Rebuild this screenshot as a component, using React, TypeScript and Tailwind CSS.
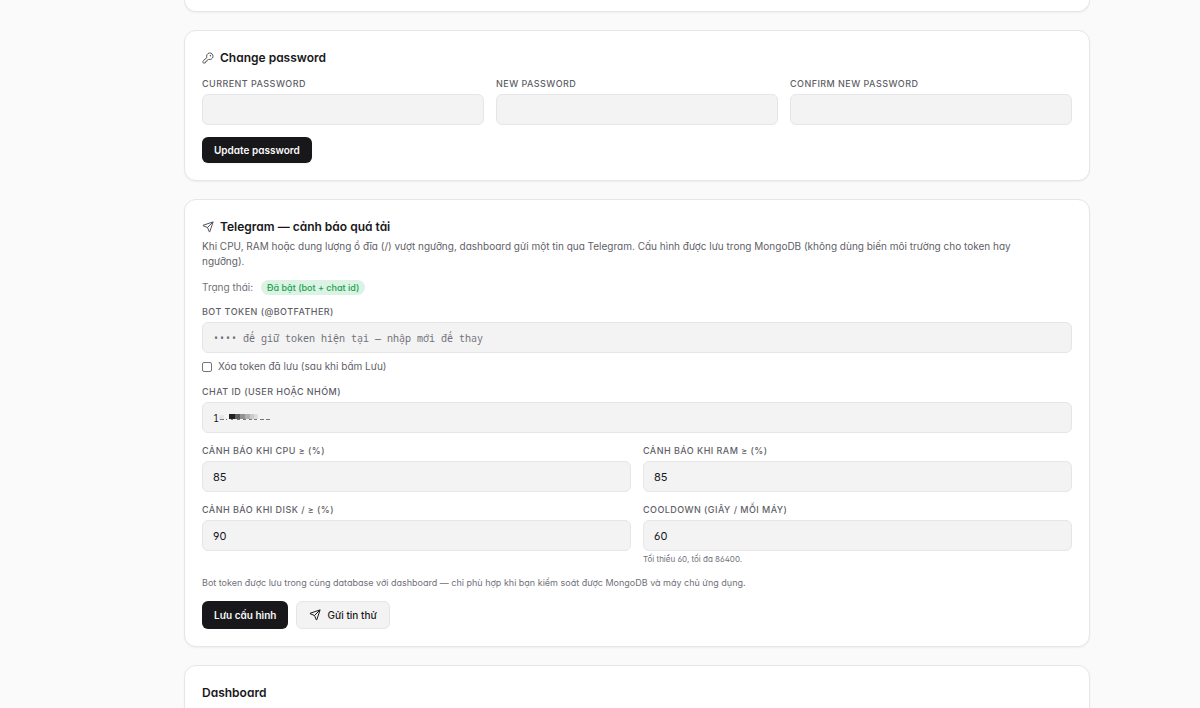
import type { InputHTMLAttributes, ReactNode } from 'react'
import { KeyRound, Send } from 'lucide-react'

type FieldProps = InputHTMLAttributes<HTMLInputElement> & {
  id: string
  label: string
  mono?: boolean
  hint?: string
  overlay?: ReactNode
}

function Field({ id, label, mono, hint, overlay, ...props }: FieldProps) {
  return (
    <div className="flex-1">
      <label htmlFor={id} className="block text-[9px] leading-3 font-medium tracking-wider uppercase text-[#5f5f68]">
        {label}
      </label>
      <div className="relative mt-1">
        <input
          id={id}
          className={`block h-[31px] w-full rounded-md border border-[#e6e6e9] bg-[#f3f3f3] px-2.5 text-[#18181b] placeholder:text-[#71717a] focus:outline-none focus:ring-1 focus:ring-zinc-400 ${
            mono ? "font-['Noto_Sans_Mono','Liberation_Mono',monospace] text-[10px]" : 'text-[11px]'
          }`}
          {...props}
        />
        {overlay}
      </div>
      {hint && <p className="mt-0.5 text-[8px] leading-3 text-[#71717a]">{hint}</p>}
    </div>
  )
}

function Card({ children }: { children: ReactNode }) {
  return (
    <section className="rounded-xl border border-[#e6e6e8] bg-white p-[17px] shadow-xs">{children}</section>
  )
}

function CardTitle({ icon, children }: { icon?: ReactNode; children: ReactNode }) {
  return (
    <h2 className="flex items-center gap-1.5 text-[12px] leading-5 font-semibold text-[#18181b]">
      {icon && <span className="text-[#52525b]">{icon}</span>}
      {children}
    </h2>
  )
}

// mosaic that hides the rest of the chat id
function Mosaic() {
  return (
    <svg viewBox="0 0 54 8" className="pointer-events-none absolute top-[11px] left-[17px] h-2 w-[54px]" aria-hidden="true">
      <g fill="#e6e6e6">
        <rect x="0" y="2" width="5" height="5" />
        <rect x="34" y="1" width="5" height="5" />
      </g>
      <rect x="10" y="1" width="6" height="5" fill="#222225" />
      <rect x="16" y="1" width="5" height="5" fill="#5f5f61" />
      <rect x="21" y="1" width="5" height="5" fill="#929294" />
      <rect x="26" y="1" width="5" height="5" fill="#b0b0b1" />
      <rect x="31" y="1" width="4" height="5" fill="#cbcbcc" />
      <rect x="35" y="1" width="4" height="5" fill="#dedede" />
      <g fill="#77777a">
        <rect x="1" y="6" width="4" height="1" />
        <rect x="7" y="6" width="1" height="1" />
        <rect x="12" y="6" width="2" height="1" />
        <rect x="18" y="6" width="3" height="1" />
        <rect x="24" y="6" width="3" height="1" />
        <rect x="30" y="6" width="3" height="1" />
        <rect x="35" y="6" width="3" height="1" />
        <rect x="41" y="6" width="4" height="1" />
        <rect x="47" y="6" width="4" height="1" />
      </g>
    </svg>
  )
}

export default function App() {
  return (
    <div className="h-screen overflow-hidden bg-[#fafafa] font-['Inter',sans-serif] [font-feature-settings:'cv02','cv03','cv04','cv11']">
      <main className="mr-[110px] ml-[184px] space-y-[18px]">
        <div className="h-3 rounded-b-xl border border-t-0 border-[#e6e6e8] bg-white shadow-xs" />

        <Card>
          <CardTitle icon={<KeyRound className="size-3" />}>Change password</CardTitle>
          <form className="mt-2.5" onSubmit={(e) => e.preventDefault()}>
            <div className="flex gap-3">
              <Field id="current" label="Current password" type="password" />
              <Field id="new" label="New password" type="password" />
              <Field id="confirm" label="Confirm new password" type="password" />
            </div>
            <button className="mt-3 h-[26px] rounded-md bg-[#18181b] px-3 text-[10px] font-semibold text-[#fafafa] shadow-xs">
              Update password
            </button>
          </form>
        </Card>

        <Card>
          <CardTitle icon={<Send className="size-3" />}>Telegram — cảnh báo quá tải</CardTitle>
          <p className="mt-0.5 pr-7 text-[10px] leading-[15px] text-[#5f5f68]">
            Khi CPU, RAM hoặc dung lượng ổ đĩa (/) vượt ngưỡng, dashboard gửi một tin qua Telegram. Cấu hình được lưu trong
            MongoDB (không dùng biến môi trường cho token hay ngưỡng).
          </p>
          <div className="mt-[11px] flex items-center gap-2 text-[10px] leading-[15px] text-[#71717a]">
            Trạng thái:
            <span className="rounded-full bg-[#dcf2e4] px-1.5 text-[9px] font-medium text-[#16a34a]">
              Đã bật (bot + chat id)
            </span>
          </div>

          <form className="mt-[11px] space-y-3" onSubmit={(e) => e.preventDefault()}>
            <div>
              <Field id="token" label="Bot token (@BotFather)" mono placeholder="•••• để giữ token hiện tại — nhập mới để thay" />
              <label className="mt-1.5 flex items-center gap-1.5 text-[10px] leading-[15px] text-[#5f5f68]">
                <input type="checkbox" className="size-2.5 appearance-none rounded-xs border border-[#767676] bg-white checked:bg-[#18181b]" />
                Xóa token đã lưu (sau khi bấm Lưu)
              </label>
            </div>
            <Field id="chat" label="Chat ID (user hoặc nhóm)" mono defaultValue="1" overlay={<Mosaic />} />
            <div className="grid grid-cols-2 gap-3">
              <Field id="cpu" label="Cảnh báo khi CPU ≥ (%)" defaultValue="85" inputMode="numeric" />
              <Field id="ram" label="Cảnh báo khi RAM ≥ (%)" defaultValue="85" inputMode="numeric" />
              <Field id="disk" label="Cảnh báo khi disk / ≥ (%)" defaultValue="90" inputMode="numeric" />
              <Field id="cooldown" label="Cooldown (giây / mỗi máy)" defaultValue="60" inputMode="numeric" hint="Tối thiểu 60, tối đa 86400." />
            </div>
            <p className="text-[9px] leading-3 text-[#71717a]">
              Bot token được lưu trong cùng database với dashboard — chỉ phù hợp khi bạn kiểm soát được MongoDB và máy chủ ứng dụng.
            </p>
            <div className="flex gap-2">
              <button className="h-7 rounded-md bg-[#18181b] px-3 text-[10px] font-semibold text-[#fafafa]">Lưu cấu hình</button>
              <button type="button" className="flex h-7 items-center gap-1.5 rounded-md border border-[#e6e6e9] bg-[#f3f3f3] px-3 text-[10px] font-medium text-[#18181b]">
                <Send className="size-3" />
                Gửi tin thử
              </button>
            </div>
          </form>
        </Card>

        <Card>
          <CardTitle>Dashboard</CardTitle>
          <div className="h-24" />
        </Card>
      </main>
    </div>
  )
}
